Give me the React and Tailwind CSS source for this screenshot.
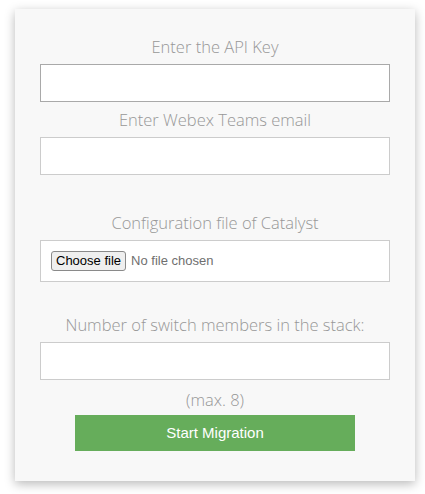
import React from "react";

function Label({ children, className = "" }) {
  return (
    <p
      className={`text-center text-[16.5px] leading-6 font-light text-[#979797] ${className}`}
      style={{ fontFamily: '"Open Sans", sans-serif' }}
    >
      {children}
    </p>
  );
}

export default function App() {
  return (
    <div className="w-[425px] h-[494px] bg-white pt-[9px] pl-[15px]">
      <div className="w-[400px] h-[472px] bg-[#f8f8f8] shadow-[0_3px_10px_rgba(0,0,0,0.28)] pt-[26px] px-[25px] flex flex-col">
        <Label>Enter the API Key</Label>
        <input
          type="text"
          className="mt-[5px] h-[38px] w-full bg-white border border-[#a9a9a9] outline-none"
        />

        <Label className="mt-[6px]">Enter Webex Teams email</Label>
        <input
          type="email"
          className="mt-[5px] h-[38px] w-full bg-white border border-[#cccccc] outline-none"
        />

        <Label className="mt-[36px]">Configuration file of Catalyst</Label>
        <label
          className="mt-[5px] h-[42px] w-full bg-white border border-[#cccccc] flex items-center px-[10px] gap-[5px] text-[13px] cursor-pointer"
          style={{ fontFamily: '"Liberation Sans", Arial, sans-serif' }}
        >
          <input type="file" className="hidden" />
          <span className="h-[20px] px-[4px] flex items-center rounded-[3px] border border-[#8a8a8a] bg-[#efefef] text-black">
            Choose file
          </span>
          <span className="text-[#6f6f6f]">No file chosen</span>
        </label>

        <Label className="mt-[31px]">Number of switch members in the stack:</Label>
        <input
          type="number"
          className="mt-[5px] h-[38px] w-full bg-white border border-[#cccccc] outline-none"
        />

        <Label className="mt-[8px]">(max. 8)</Label>
        <button
          className="mt-[3px] mx-auto w-[280px] h-[36px] bg-[#66ad5b] text-white text-[15px]"
          style={{ fontFamily: '"Liberation Sans", Arial, sans-serif' }}
        >
          Start Migration
        </button>
      </div>
    </div>
  );
}
